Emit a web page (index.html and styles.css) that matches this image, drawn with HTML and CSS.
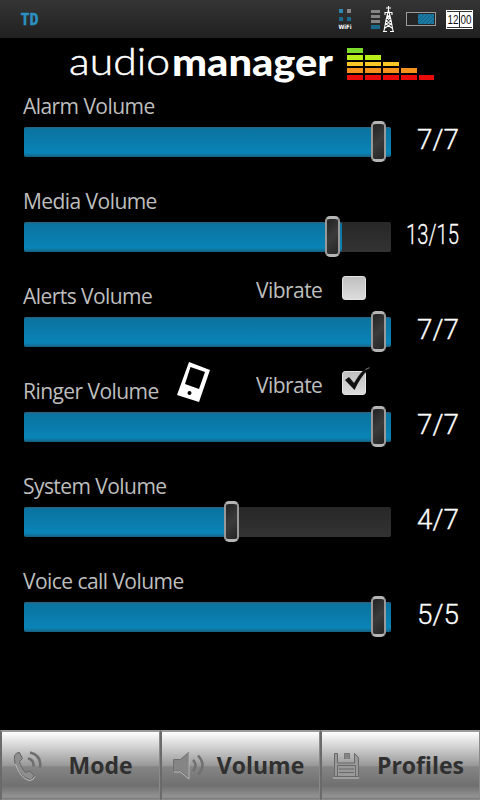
FILE: index.html
```html
<!DOCTYPE html>
<html lang="en">
<head>
    <meta charset="UTF-8">
    <meta name="viewport" content="width=device-width, initial-scale=1.0">
    <title>Audio Manager</title>
    <link rel="stylesheet" href="styles.css">
</head>
<body>
    <div class="status-bar">
        <svg class="status-left" width="60" height="38">
            <text class="td" x="20.500" y="24.500" textLength="18" lengthAdjust="spacingAndGlyphs">TD</text>
        </svg>
        <svg class="status-icons" width="148" height="38">
            <!-- wifi -->
            <rect x="7" y="9" width="4" height="4" fill="#2f87b0"/>
            <rect x="15" y="9" width="4" height="4" fill="#8b8788"/>
            <rect x="7" y="17" width="4" height="4" fill="#1d688c"/>
            <rect x="15" y="17" width="4" height="4" fill="#1d688c"/>
            <text class="wifi" x="6.500" y="29" textLength="13" lengthAdjust="spacingAndGlyphs">WiFi</text>
            <!-- signal and mast -->
            <path d="M39 10h9v3h-9zM39 15h9v3h-9zM39 20h9v3h-9z" fill="#858585"/>
            <rect x="39" y="25" width="9" height="4" fill="#19698d"/>
            <path d="M56.500 6v4M54 8h5M56.500 10l-2.500 10-2 11M56.500 10l2.500 10 2 11M52.500 12.500h8M53 12v3M60 12v3M55 15l3 3-4 3 5 3-6 4M58 15l-3 3 4 3-5 3 6 4M51 31.500h4M58 31.500h4" fill="none" stroke="#fff" stroke-width="1.100"/>
            <!-- battery -->
            <rect x="74.500" y="12.500" width="29" height="13" fill="#252525" stroke="#9a9a9a"/>
            <rect x="86" y="14" width="16" height="10" fill="#1b7aa3"/>
            <path d="M86 16l2-2M86 20l6-6M86 24l10-10M90 24l10-10M94 24l8-8M98 24l4-4" stroke="#155e80" stroke-width="1"/>
            <!-- clock -->
            <rect x="114" y="10" width="27" height="19" fill="#fff"/>
            <path d="M115 11.500h25M115 27.500h25" stroke="#333"/>
            <rect x="127" y="12" width="1" height="15" fill="#222"/>
            <text class="clock" x="115.500" y="23.500" textLength="11" lengthAdjust="spacingAndGlyphs">12</text>
            <text class="clock" x="128.500" y="23.500" textLength="11" lengthAdjust="spacingAndGlyphs">00</text>
        </svg>
    </div>

    <svg class="logo" width="480" height="49">
        <text class="logo-light" x="69" y="37" textLength="101" lengthAdjust="spacingAndGlyphs">audio</text>
        <text class="logo-bold" x="172" y="37.500" textLength="161" lengthAdjust="spacingAndGlyphs">manager</text>
        <path d="M347 10h16v5h-16z" fill="#7ddc2c"/>
        <path d="M347 17h16v5h-16zM365 17h16v5h-16z" fill="#b9ef19"/>
        <path d="M347 24h16v4h-16zM365 24h16v4h-16zM383 24h16v4h-16z" fill="#fac727"/>
        <path d="M347 30h16v5h-16zM365 30h16v5h-16zM383 30h16v5h-16zM401 30h16v5h-16z" fill="#f5921e"/>
        <path d="M347 37h16v5h-16zM365 37h16v5h-16zM383 37h16v5h-16zM401 37h16v5h-16zM419 37h15v5h-15z" fill="#ec0b0b"/>
    </svg>

    <main class="volumes">
        <section class="volume">
            <div class="volume-head"><span class="label">Alarm Volume</span></div>
            <div class="volume-body">
                <div class="track">
                    <div class="fill" style="width: 100%"></div>
                    <div class="thumb" style="left: 347px"></div>
                </div>
                <svg class="value" width="70" height="30"><text x="17" y="22" textLength="42" lengthAdjust="spacingAndGlyphs">7/7</text></svg>
            </div>
        </section>

        <section class="volume">
            <div class="volume-head"><span class="label">Media Volume</span></div>
            <div class="volume-body">
                <div class="track">
                    <div class="fill" style="width: 86.700%"></div>
                    <div class="thumb" style="left: 301px"></div>
                </div>
                <svg class="value" width="70" height="30"><text x="6" y="22" textLength="53" lengthAdjust="spacingAndGlyphs">13/15</text></svg>
            </div>
        </section>

        <section class="volume">
            <div class="volume-head">
                <span class="label">Alerts Volume</span>
                <label class="vibrate"><span class="vibrate-text">Vibrate</span><span class="checkbox"></span></label>
            </div>
            <div class="volume-body">
                <div class="track">
                    <div class="fill" style="width: 100%"></div>
                    <div class="thumb" style="left: 347px"></div>
                </div>
                <svg class="value" width="70" height="30"><text x="17" y="22" textLength="42" lengthAdjust="spacingAndGlyphs">7/7</text></svg>
            </div>
        </section>

        <section class="volume">
            <div class="volume-head">
                <span class="label">Ringer Volume</span>
                <svg class="phone" width="36" height="42" viewBox="0 0 36 42">
                    <path fill="#fff" fill-rule="evenodd" d="M13 1l21 8-11 32-22-7zM14.500 6L9 23l14 5 6-17z"/>
                    <circle cx="13.500" cy="32" r="2" fill="#000"/>
                </svg>
                <label class="vibrate">
                    <span class="vibrate-text">Vibrate</span>
                    <span class="checkbox">
                        <svg class="check" width="30" height="28" viewBox="0 0 30 28">
                            <path fill="#111" d="M3 13l4-3 5 6C16 9 20 4 24 1l4-1-1 1.500C21 7 17 14 12.500 23z"/>
                            <path d="M23.500 2.500L27.500.7" stroke="#777" stroke-width="1"/>
                        </svg>
                    </span>
                </label>
            </div>
            <div class="volume-body">
                <div class="track">
                    <div class="fill" style="width: 100%"></div>
                    <div class="thumb" style="left: 347px"></div>
                </div>
                <svg class="value" width="70" height="30"><text x="17" y="22" textLength="42" lengthAdjust="spacingAndGlyphs">7/7</text></svg>
            </div>
        </section>

        <section class="volume">
            <div class="volume-head"><span class="label">System Volume</span></div>
            <div class="volume-body">
                <div class="track">
                    <div class="fill" style="width: 57.100%"></div>
                    <div class="thumb" style="left: 200px"></div>
                </div>
                <svg class="value" width="70" height="30"><text x="17" y="22" textLength="42" lengthAdjust="spacingAndGlyphs">4/7</text></svg>
            </div>
        </section>

        <section class="volume">
            <div class="volume-head"><span class="label">Voice call Volume</span></div>
            <div class="volume-body">
                <div class="track">
                    <div class="fill" style="width: 100%"></div>
                    <div class="thumb" style="left: 347px"></div>
                </div>
                <svg class="value" width="70" height="30"><text x="17" y="22" textLength="42" lengthAdjust="spacingAndGlyphs">5/5</text></svg>
            </div>
        </section>
    </main>

    <nav class="tabs">
        <button class="tab">
            <svg class="tab-icon" width="32" height="32" viewBox="0 0 32 32">
                <path d="M1.500 5.500q2-3.500 5-3l3 6-3 3c1 4 3 8 6 11l4-1.500 4.500 4.500q-1 4-4 4C9 28 0 16 1.500 5.500z" fill="#8e8e8e" stroke="#666"/>
                <path d="M2.500 14C5 22 10 29 16.500 30.500q4 0 5.500-4" fill="none" stroke="#c2c2c2"/>
                <path d="M15 8.500q6 1 5.500 8M17 2.500q12 3 10 15" fill="none" stroke="#6e6e6e" stroke-width="2.500"/>
            </svg>
            <span>Mode</span>
        </button>
        <button class="tab">
            <svg class="tab-icon" width="32" height="32" viewBox="0 0 32 32">
                <path d="M.5 9.500h7l8-7v25l-8-6.500h-7z" fill="#858585" stroke="#707070"/>
                <path d="M1 22h6.500l8.500 7V3" fill="none" stroke="#bbb"/>
                <path d="M20 10q5 5 0 11M25 5.500q9 9.500 0 19" fill="none" stroke="#707070" stroke-width="2.500"/>
            </svg>
            <span>Volume</span>
        </button>
        <button class="tab">
            <svg class="tab-icon" width="32" height="32" viewBox="0 0 32 32">
                <path d="M1.500 3.500h3V13h17V3.500l4 4v19h-24z" fill="#999" stroke="#696969"/>
                <path d="M11.500 9V3.500h5V9" fill="#858585" stroke="#777"/>
                <path d="M4.500 26.500V15.500h18v11M6 19h15M6 22.500h15" fill="none" stroke="#696969"/>
                <path d="M0 28h26" stroke="#c4c4c4"/>
            </svg>
            <span>Profiles</span>
        </button>
    </nav>
</body>
</html>
```
FILE: styles.css
```css
* {
    margin: 0;
    padding: 0;
    box-sizing: border-box;
}

body {
    width: 480px;
    height: 800px;
    background: #000;
    color: #bebebe;
    font-family: 'Open Sans', 'Noto Sans', sans-serif;
    display: flex;
    flex-direction: column;
    overflow: hidden;
}

svg {
    display: block;
    flex: none;
    overflow: visible;
}

/* Status bar */
.status-bar {
    height: 38px;
    display: flex;
    justify-content: space-between;
    background: linear-gradient(#353535, #202020);
}

.td {
    font: bold 15px 'DejaVu Sans Mono', monospace;
    fill: #2a91c2;
    stroke: #2a91c2;
    stroke-width: 0.4px;
}

.wifi {
    font: bold 6px 'DejaVu Sans', sans-serif;
    fill: #fff;
}

.clock {
    font: 12px 'Liberation Sans', sans-serif;
    fill: #111;
}

/* Logo */
.logo-light {
    font: 300 38px Lato, sans-serif;
    fill: #fff;
    stroke: #fff;
    stroke-width: 0.5px;
}

.logo-bold {
    font: 900 38px Lato, sans-serif;
    fill: #fff;
}

/* Volume rows */
.volumes {
    flex: 1;
}

.volume {
    height: 95px;
}

.volume-head {
    height: 40px;
    padding: 0 0 4px 23px;
    display: flex;
    align-items: center;
}

.label,
.vibrate-text {
    font-size: 22px;
    line-height: 30px;
    letter-spacing: -0.6px;
    white-space: nowrap;
    transform: scaleX(0.956);
    transform-origin: left;
}

.vibrate-text {
    transform-origin: right;
}

.volume-body {
    display: flex;
    padding-left: 24px;
    gap: 9px;
}

.track {
    position: relative;
    width: 367px;
    height: 30px;
    border-radius: 2px;
    background: linear-gradient(#272727, #333);
}

.fill {
    height: 30px;
    border-radius: 2px;
    background: linear-gradient(#31617a 0, #0b73a0 2px, #0984b7 26px, #17607f 100%);
}

.thumb {
    position: absolute;
    top: -6px;
    width: 15px;
    height: 41px;
    border: 2px solid #999;
    border-top: 3px solid #b5b5b5;
    border-bottom: 3px solid #b5b5b5;
    border-radius: 5px;
    background: linear-gradient(135deg, #232323, #3b3b3b 50%, #252525);
}

.value text {
    font: 300 28px Roboto, sans-serif;
    fill: #fff;
    stroke: #fff;
    stroke-width: 0.3px;
}

.vibrate {
    display: flex;
    align-items: center;
    gap: 20px;
    margin: -12px 114px 0 auto;
}

.checkbox {
    position: relative;
    width: 24px;
    height: 24px;
    margin-top: -3px;
    flex: none;
    border: 1px solid #e4e4e4;
    border-radius: 3px;
    background: linear-gradient(#c0c0c0, #dcdcdc);
}

.check {
    position: absolute;
    left: -1px;
    top: -5px;
}

.phone {
    margin: -16px 0 0 11px;
}

/* Bottom tabs */
.tabs {
    height: 70px;
    display: flex;
}

.tab {
    width: 160px;
    height: 70px;
    padding: 0 3px 1px 11px;
    display: flex;
    align-items: center;
    border: 1px solid #8a8a8a;
    border-top: 2px solid #9b9b9b;
    border-left: 2px solid #6a6a6a;
    background: linear-gradient(#fff 0, #eee 8%, #999 50%, #858585 52%, #707070 80%, #939393 97%, #777 100%);
    font: bold 23px 'Open Sans', sans-serif;
    color: #303030;
}

.tab-icon {
    margin-top: 2px;
}

.tab span {
    flex: 1;
    text-align: center;
}
```
